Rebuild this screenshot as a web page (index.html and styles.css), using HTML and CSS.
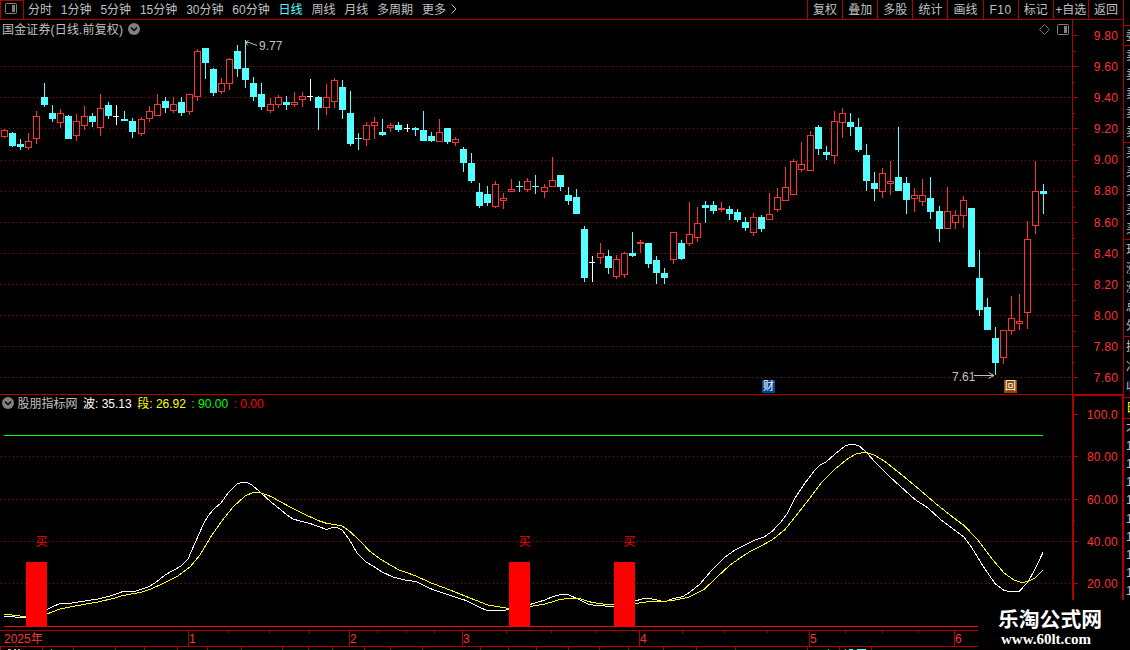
FILE: index.html
```
<!DOCTYPE html>
<html lang="zh-CN">
<head>
  <meta charset="UTF-8">
  <title>国金证券 日线</title>
  <link rel="stylesheet" href="styles.css">
</head>
<body>
  <div class="app">
    <div class="main">
      <header class="toolbar">
        <div class="layout-toggle">
          <svg width="12" height="11" viewBox="0 0 12 11"><rect x="0.5" y="0.5" width="11" height="10" rx="1" fill="none" stroke="#808080"/><rect x="7" y="2" width="3" height="7" fill="#808080"/></svg>
        </div>
        <nav class="periods">
          <span>分时</span>
          <span>1分钟</span>
          <span>5分钟</span>
          <span>15分钟</span>
          <span>30分钟</span>
          <span>60分钟</span>
          <span class="active">日线</span>
          <span>周线</span>
          <span>月线</span>
          <span>多周期</span>
          <span>更多</span>
          <svg class="more" width="6" height="10" viewBox="0 0 6 10"><path d="M0.5 0.5L5 5L0.5 9.5" fill="none" stroke="#c0c0c0"/></svg>
        </nav>
        <div class="tools">
          <span>复权</span>
          <span>叠加</span>
          <span>多股</span>
          <span>统计</span>
          <span>画线</span>
          <span class="wide">F10</span>
          <span>标记</span>
          <span>+自选</span>
          <span>返回</span>
        </div>
      </header>

      <section class="panel price-panel">
        <svg id="priceChart" width="1123" height="374" viewBox="0 20 1123 374"></svg>
        <div class="panel-title stock-title">
          <span class="stock-name">国金证券(日线.前复权)</span>
          <svg width="12" height="12" viewBox="0 0 12 12"><circle cx="6" cy="6" r="6" fill="#808080"/><path d="M3 4.5L6 7.5L9 4.5" fill="none" stroke="#000" stroke-width="1.5"/></svg>
        </div>
        <div class="panel-icons">
          <svg width="11" height="11" viewBox="0 0 11 11"><path d="M5.5 0.5L10.5 5.5L5.5 10.5L0.5 5.5Z" fill="none" stroke="#707070"/></svg>
          <svg width="12" height="11" viewBox="0 0 12 11"><rect x="0.5" y="0.5" width="11" height="10" rx="1" fill="none" stroke="#808080"/><rect x="7" y="2" width="3" height="7" fill="#808080"/></svg>
        </div>
        <div class="scale price-scale">
          <span>9.80</span><span>9.60</span><span>9.40</span><span>9.20</span>
          <span>9.00</span><span>8.80</span><span>8.60</span><span>8.40</span>
          <span>8.20</span><span>8.00</span><span>7.80</span><span>7.60</span>
        </div>
        <span class="badge badge-report">财</span>
        <span class="badge badge-buyback">回</span>
      </section>

      <section class="panel wave-panel">
        <svg id="waveChart" width="1123" height="236" viewBox="0 394 1123 236"></svg>
        <div class="panel-title wave-title">
          <svg width="12" height="12" viewBox="0 0 12 12"><circle cx="6" cy="6" r="6" fill="#808080"/><path d="M3 4.5L6 7.5L9 4.5" fill="none" stroke="#000" stroke-width="1.5"/></svg>
          <span class="name">股朋指标网</span>
          <span class="white">波: 35.13</span>
          <span class="yellow">段: 26.92</span>
          <span class="green">: 90.00</span>
          <span class="red">: 0.00</span>
        </div>
        <div class="scale wave-scale">
          <span>100.0</span><span>80.00</span><span>60.00</span><span>40.00</span><span>20.00</span>
        </div>
      </section>

      <footer class="dates">
        <svg id="dateAxis" width="1123" height="20" viewBox="0 630 1123 20"></svg>
      </footer>
    </div>

    <aside class="quote">
      <div class="q-gap"></div>
      <div class="q-group q-head"><span>委</span></div>
      <div class="q-group q-five"><span>卖</span><span>卖</span><span>卖</span><span>卖</span><span>卖</span></div>
      <div class="q-group q-five"><span>买</span><span>买</span><span>买</span><span>买</span><span>买</span></div>
      <div class="q-group q-five"><span>现</span><span>涨</span><span>涨</span><span>总</span><span>外</span></div>
      <div class="q-group q-three"><span>换</span><span>净</span><span>收</span></div>
      <div class="q-group q-tab"><span>日</span></div>
      <div class="q-group q-ticks"><span>才</span><span>1</span><span>1</span><span>1</span><span>1</span><span>1</span><span>1</span><span>1</span><span>1</span><span>1</span></div>
    </aside>
  </div>

  <div class="watermark">
    <div class="site-name">乐淘公式网</div>
    <div class="site-url">www.60lt.com</div>
  </div>

  <script src="chart.js"></script>
</body>
</html>
```
FILE: styles.css
```
* {
  box-sizing: border-box;
}
body {
  margin: 0;
  background: #000;
  color: #c0c0c0;
  font-family: "Liberation Sans", "Noto Sans CJK SC", sans-serif;
  font-size: 12px;
  line-height: 14px;
  overflow: hidden;
}
svg {
  display: block;
}
.app {
  display: flex;
  width: 1130px;
  height: 650px;
  overflow: hidden;
}
.main {
  width: 1123px;
  flex: none;
}

/* toolbar */
.toolbar {
  display: flex;
  height: 20px;
  border-bottom: 1px solid #b00000;
}
.layout-toggle {
  width: 24px;
  padding: 2px 0 0 4px;
  border: 1px solid #b00000;
  border-bottom: none;
}
.periods {
  display: flex;
  flex: 1;
  gap: 8.85px;
  padding: 3px 0 0 4px;
  white-space: nowrap;
}
.periods .active {
  color: #54ffff;
}
.periods .more {
  margin: 1px 0 0 -4px;
}
.tools {
  display: grid;
  grid-template-columns: repeat(9, 1fr);
  width: 316px;
}
.tools span {
  border-left: 1px solid #b00000;
  padding-top: 3px;
  text-align: center;
  white-space: nowrap;
}
.tools .wide {
  letter-spacing: 0.5px;
}

/* chart panels */
.panel {
  position: relative;
}
.price-panel {
  height: 374px;
}
.wave-panel {
  height: 236px;
}
.panel-title {
  position: absolute;
  display: flex;
  align-items: center;
  white-space: nowrap;
}
.panel-title span {
  position: relative;
  top: 1px;
}
.stock-title {
  left: 2px;
  top: 2px;
  gap: 5px;
}
.stock-name {
  letter-spacing: 0.15px;
}
.wave-title {
  left: 2px;
  top: 2px;
  gap: 5.5px;
}
.wave-title .name {
  margin-left: -2px;
}
.white { color: #fff; }
.yellow { color: #ff0; }
.green { color: #0f0; }
.red { color: #f00; }
.panel-icons {
  position: absolute;
  left: 1039px;
  top: 4px;
  display: flex;
  gap: 7px;
}
.scale {
  position: absolute;
  right: 5px;
  top: 0;
  display: flex;
  flex-direction: column;
  color: #ff3232;
  text-align: right;
  letter-spacing: 0.2px;
}
.price-scale span {
  height: 31.1px;
  line-height: 32px;
}
.wave-scale {
  top: -1px;
}
.wave-scale span {
  height: 42.25px;
  line-height: 44px;
}
.badge {
  position: absolute;
  width: 13px;
  height: 13px;
  color: #fff;
  font-size: 11px;
  line-height: 13px;
  text-align: center;
}
.badge-report {
  left: 762px;
  top: 360px;
  background: #004890;
}
.badge-buyback {
  left: 1004px;
  top: 360px;
  background: #904800;
}

/* labels inside the charts */
.mark {
  fill: #c0c0c0;
  font-size: 12px;
}
.buy {
  fill: #f00;
  font-size: 12px;
}
.month {
  fill: #ff3232;
  font-size: 12px;
}

/* quote column */
.quote {
  flex: none;
  width: 120px;
  border-left: 1px solid #b00000;
}
.q-gap {
  height: 25px;
}
.q-group {
  display: flex;
  flex-direction: column;
  justify-content: space-around;
  border-top: 1px solid #b00000;
  padding-left: 2px;
}
.q-head { height: 20px; }
.q-five { height: 97px; }
.q-three { height: 61px; }
.q-tab {
  height: 21px;
  color: #ff0;
}
.q-ticks {
  height: 182px;
}

.watermark {
  position: absolute;
  left: 978px;
  top: 600px;
  width: 152px;
  height: 50px;
  padding: 8px 0 0 20px;
  background: #000;
  color: #fff;
}
.site-name {
  font-size: 20.8px;
  font-weight: bold;
  line-height: 23px;
}
.site-url {
  padding-left: 3px;
  font-family: "Liberation Serif", serif;
  font-size: 15px;
  font-weight: bold;
  line-height: 16px;
}
```
FILE: chart.js
```
const COLORS = { r: '#ff3232', c: '#54ffff', w: '#ffffff' };
const LINE = '#b00000';

// left, high, body top, body bottom, low, kind (r = up, c = down, w = flat)
const candles = [
  [1,129,130,137,138,'r'],[9,132,133,146,147,'c'],[17,139,144,147,150,'c'],[25,133,141,148,150,'r'],
  [33,111,116,139,144,'r'],[41,83,97,105,107,'c'],[49,105,113,119,122,'c'],[57,109,113,123,128,'r'],
  [65,115,116,139,139,'c'],[73,114,121,136,141,'r'],[81,106,116,126,130,'r'],[89,113,116,122,127,'c'],
  [97,94,108,128,136,'r'],[105,102,105,116,119,'c'],[113,105,116,117,125,'w'],[121,111,119,121,121,'c'],
  [129,118,121,132,138,'c'],[138,117,119,134,136,'r'],[146,106,111,119,122,'r'],[154,94,104,116,116,'r'],
  [162,97,101,108,113,'c'],[170,97,104,111,113,'r'],[178,97,102,113,116,'c'],[186,94,94,112,115,'r'],
  [194,49,51,97,101,'r'],[202,48,48,63,79,'c'],[210,68,69,93,96,'c'],[218,78,83,92,94,'r'],
  [226,58,59,84,90,'r'],[234,45,51,69,77,'c'],[242,40,68,80,88,'c'],[250,77,83,97,101,'c'],
  [258,83,94,107,110,'c'],[267,98,104,111,113,'r'],[275,95,97,105,108,'r'],[283,96,102,105,110,'c'],
  [291,92,102,105,107,'r'],[299,92,96,100,107,'r'],[307,79,96,97,101,'w'],[315,96,97,108,130,'c'],
  [323,84,97,108,115,'r'],[331,78,80,102,108,'r'],[339,80,87,110,119,'c'],[347,91,113,144,146,'c'],
  [355,133,138,139,150,'c'],[363,122,125,140,146,'r'],[371,117,122,126,139,'r'],[379,119,132,135,136,'c'],
  [387,123,125,128,132,'r'],[395,122,125,130,132,'c'],[404,124,128,129,132,'w'],[412,127,128,130,136,'c'],
  [420,111,130,141,141,'c'],[428,132,136,141,142,'c'],[436,119,132,142,142,'r'],[444,128,128,142,144,'c'],
  [452,137,139,143,146,'r'],[460,147,149,163,172,'c'],[468,153,163,181,183,'c'],[476,183,192,206,208,'c'],
  [484,186,194,203,206,'c'],[492,181,184,207,208,'r'],[500,193,198,201,209,'r'],[508,179,189,192,192,'r'],
  [516,181,186,187,192,'c'],[524,178,181,190,192,'r'],[532,175,186,187,194,'c'],[541,184,187,192,198,'r'],
  [549,157,180,187,187,'r'],[557,175,175,187,191,'c'],[565,187,195,201,205,'c'],[573,189,197,214,214,'c'],
  [581,226,229,278,282,'c'],[589,256,262,263,282,'w'],[597,243,253,258,264,'r'],[605,250,256,268,274,'c'],
  [613,255,259,277,279,'r'],[621,252,253,275,278,'r'],[629,232,253,256,257,'c'],[637,240,242,244,253,'r'],
  [645,243,243,264,268,'c'],[653,256,260,273,284,'c'],[661,268,273,278,284,'c'],[670,232,232,260,264,'r'],
  [678,240,243,259,260,'c'],[686,202,234,244,246,'r'],[694,207,223,238,242,'r'],[702,201,205,208,223,'c'],
  [710,201,205,211,214,'c'],[718,202,208,210,212,'r'],[726,206,209,214,220,'c'],[734,209,212,220,222,'c'],
  [742,217,222,228,231,'c'],[750,213,217,233,236,'r'],[758,215,217,229,232,'c'],[766,193,214,220,220,'r'],
  [774,188,197,210,212,'r'],[782,167,187,201,201,'r'],[790,159,161,195,195,'r'],[798,142,164,170,172,'r'],
  [807,131,135,171,171,'r'],[815,125,127,149,155,'c'],[823,146,152,155,160,'c'],[831,111,121,156,164,'r'],
  [839,108,113,123,138,'r'],[847,113,122,127,136,'c'],[855,118,127,150,152,'c'],[863,144,155,181,191,'c'],
  [871,172,183,189,201,'c'],[879,168,173,192,198,'r'],[887,161,181,184,195,'r'],[895,127,177,191,191,'c'],
  [903,177,183,200,214,'c'],[911,188,195,199,212,'r'],[919,179,195,202,206,'r'],[927,177,198,212,219,'c'],
  [936,206,211,229,242,'c'],[944,187,211,229,229,'r'],[952,210,215,223,229,'r'],[960,196,200,216,228,'r'],
  [968,208,208,267,267,'c'],[976,250,278,310,316,'c'],[984,298,307,330,330,'c'],[992,327,338,363,375,'c'],
  [1000,330,330,358,364,'r'],[1008,296,318,331,335,'r'],[1016,294,321,324,330,'r'],[1024,221,239,313,329,'r'],
  [1032,161,191,226,234,'r'],[1040,184,191,194,214,'c']
];

// the buy bars cut each curve into pieces
const waveLine = [
  '4,616 10,616 18,617.5 26,618',
  '47,609.5 52,607 60,603.5 72,603 85,601 98,599 110,596 123,591.5 136,591 147,587.5 155,583 165,575 181,566 188,559 195,543 203,525 208,516 214,509 221,503 228,493 237,484 241,482.7 247,482.7 252,485 260,492 271,502 281,510 287,515 293,519 300,521 310,523.5 320,527 326,529.5 331,528 337,527.5 342,530 349,539 357,553 366,562 373,566 382,572 393,577 405,580 416,581.5 430,588.5 440,592 455,597 466,600.5 479,607 487,610.5 505,610.5 509,609',
  '530,604.5 538,602 545,600 553,596.5 561,594.5 569,595 578,599 588,604 596,605.5 614,606.5',
  '635,601 642,599 650,598.5 657,600 664,602 672,599 683,596.5 690,592 700,584 712,570 725,557 735,550 750,542.5 755,540 764,537 772,531.5 780,523 787,514 795,498 805,483 815,470 820,465 826,462 835,454 845,446 850,444.5 855,444.5 860,446.5 867,453 875,462 890,477 900,486 915,499.5 928,508 940,519 955,530.5 964,537 972,548 983,566 995,583.5 1004,590.5 1010,591.5 1019,591.5 1028,582 1035,569 1043,552.5'
];
const trendLine = [
  '4,614 12,615 20,616 26,617',
  '47,614 60,609 72,606.5 98,602 115,598 123,595.5 140,592.5 150,589.5 165,582.5 178,576 190,567 200,555 210,538 221,522 233,507 245,496 253,492.5 261,493 271,496.5 280,501.5 290,507 304,514 318,520.5 327,523.5 335,524.5 342,526 350,531.5 360,541 369,550.5 380,559 398,569.5 416,576 430,582.5 450,590 475,600 488,605 500,607 509,608.5',
  '530,606.5 545,604 560,599.5 572,598 581,599 592,602.5 603,604 614,605',
  '635,603.5 650,601.5 663,601.5 675,600 688,597.5 704,589.5 716,578 730,565 740,558 750,551.5 760,546.5 772,540 785,529.5 795,517 810,498 822,482 835,469 848,458.5 857,453.5 866,452.3 874,455 885,461.5 905,477.5 920,490 935,503 950,515 964,525.5 978,540 993,560 1004,573 1014,580 1022,582.5 1028,581.5 1035,578 1043,570'
];

function rect(x, y, w, h, fill) {
  return `<rect x="${x}" y="${y}" width="${w}" height="${h}" fill="${fill}"/>`;
}

function text(x, y, cls, value) {
  return `<text x="${x}" y="${y}" class="${cls}">${value}</text>`;
}

function dotted(y) {
  return `<path d="M1 ${y + 0.5}H1072" stroke="#a00808" stroke-dasharray="1 3" shape-rendering="crispEdges"/>`;
}

function candle([x, high, top, bottom, low, kind]) {
  const color = COLORS[kind];
  if (kind === 'w') {
    return rect(x, top, 6, 1, color) + rect(x + 3, high, 1, low - high, color);
  }
  if (kind === 'c') {
    return rect(x, top, 7, bottom - top, color) + rect(x + 3, high, 1, low - high, color);
  }
  return rect(x + 3, high, 1, top - high, color) +
    rect(x + 3, bottom, 1, low - bottom, color) +
    `<rect x="${x + 0.5}" y="${top + 0.5}" width="6" height="${bottom - top - 1}" fill="none" stroke="${color}"/>`;
}

function drawPrice() {
  const grid = [66, 97, 128, 160, 191, 222, 253, 284, 315, 346, 377];
  let out = grid.map(dotted).join('');
  out += rect(1072, 20, 1, 374, LINE);
  [35, ...grid].forEach(y => {
    out += rect(1073, y, 5, 1, LINE);
    if (y < 377) out += rect(1073, y + 16, 2, 1, LINE);
  });
  out += candles.map(candle).join('');
  out += '<path d="M246 42.5H249L257 45.5M245.5 42.5L248.5 40.5M245.5 42.5L248 45.5" fill="none" stroke="#c0c0c0"/>';
  out += text(259, 50, 'mark', '9.77');
  out += text(952, 381, 'mark', '7.61');
  out += '<path d="M974 375.5H994M988.5 372.5L994 375.5L988.5 378.5" fill="none" stroke="#c0c0c0"/>';
  document.getElementById('priceChart').innerHTML = out;
}

function drawWave() {
  let out = [456, 499, 541, 583].map(dotted).join('');
  out += rect(0, 394, 1123, 1, LINE) + rect(1072, 395, 51, 1, LINE);
  out += rect(1072, 394, 2, 236, LINE) + rect(1122, 394, 1, 236, LINE);
  [414, 456, 499, 541, 583].forEach(y => {
    out += rect(1074, y, 4, 1, LINE) + rect(1074, y + 21, 1, 1, LINE);
  });
  out += rect(4, 435, 1039, 1, '#00ff00');
  waveLine.forEach(p => {
    out += `<polyline points="${p}" fill="none" stroke="#fff" shape-rendering="crispEdges"/>`;
  });
  trendLine.forEach(p => {
    out += `<polyline points="${p}" fill="none" stroke="#ff0" shape-rendering="crispEdges"/>`;
  });
  [26, 509, 614].forEach(x => {
    out += rect(x, 562, 21, 64, '#ff0000') + text(x + 9.5, 546, 'buy', '买');
  });
  out += rect(4, 626, 1068, 1, '#ff0000');
  document.getElementById('waveChart').innerHTML = out;
}

function drawDates() {
  const months = [[188, 1], [349, 2], [462, 3], [639, 4], [809, 5], [954, 6]];
  const weeks = [228, 269, 309, 377, 406, 434, 506, 551, 595, 682, 724, 767, 845, 882, 918];
  const tabs = [0, 42, 73, 115, 144, 177, 207, 241, 282, 308, 332, 364, 390, 422, 480, 508, 536, 568, 599, 628, 663, 696, 735, 807, 839, 871];
  let out = rect(0, 630, 1123, 1, LINE) + rect(0, 646, 1123, 1, LINE);
  out += text(4, 643, 'month', '2025年');
  months.forEach(([x, m]) => {
    out += rect(x, 631, 1, 15, LINE) + text(x + 1, 643, 'month', m);
  });
  weeks.forEach(x => { out += rect(x, 631, 1, 2, LINE); });
  tabs.forEach(x => { out += rect(x, 647, 1, 3, LINE); });
  // tops of the tab captions below the window edge
  [[8, 3], [14, 2], [18, 2], [51, 1], [828, 1], [845, 1]].forEach(([x, w]) => {
    out += rect(x, 649, w, 1, '#c0c0c0');
  });
  [[849, 4], [857, 9]].forEach(([x, w]) => {
    out += rect(x, 649, w, 1, '#54ffff');
  });
  document.getElementById('dateAxis').innerHTML = out;
}

drawPrice();
drawWave();
drawDates();
```
